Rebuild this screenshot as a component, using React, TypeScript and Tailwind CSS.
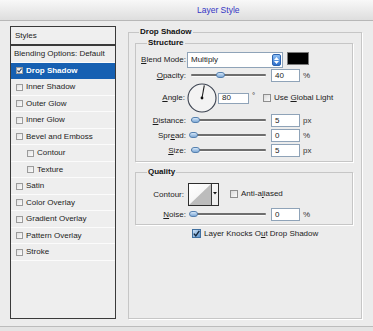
import type { ReactNode } from 'react';

type StyleRow = {
    name: string;
    h: string; // alternating 17/16 so the rows land where the list has them
    checked?: boolean;
    selected?: boolean;
    sub?: boolean;
    noBox?: boolean;
};

const styleRows: StyleRow[] = [
    { name: "Blending Options: Default", h: "h-[17px]", noBox: true },
    { name: "Drop Shadow", h: "h-[16px]", checked: true, selected: true },
    { name: "Inner Shadow", h: "h-[17px]" },
    { name: "Outer Glow", h: "h-[16px]" },
    { name: "Inner Glow", h: "h-[17px]" },
    { name: "Bevel and Emboss", h: "h-[16px]" },
    { name: "Contour", h: "h-[17px]", sub: true },
    { name: "Texture", h: "h-[16px]", sub: true },
    { name: "Satin", h: "h-[17px]" },
    { name: "Color Overlay", h: "h-[16px]" },
    { name: "Gradient Overlay", h: "h-[17px]" },
    { name: "Pattern Overlay", h: "h-[16px]" },
    { name: "Stroke", h: "h-[17px]" },
];

function ListBox({ checked }: { checked?: boolean }) {
    return (
        <div className="flex h-[7px] w-[7px] items-center justify-center border border-[#9b9b9b] bg-gradient-to-br from-[#e2e2e2] to-[#fbfbfb]">
            {checked && (
                <svg width="5" height="5" viewBox="0 0 5 5">
                    <path d="M0.5 2.5 L2 4 L4.6 0.6" fill="none" stroke="#1d3f6e" strokeWidth="1.1" />
                </svg>
            )}
        </div>
    );
}

function CheckBox({ checked }: { checked?: boolean }) {
    if (checked) {
        return (
            <div className="flex h-[9px] w-[9px] items-center justify-center border border-[#3f6f9f] bg-gradient-to-br from-[#cfe2f5] to-[#5b93cc]">
                <svg width="7" height="7" viewBox="0 0 7 7">
                    <path d="M0.8 3.6 L2.8 5.8 L6.3 0.9" fill="none" stroke="#13263b" strokeWidth="1.4" />
                </svg>
            </div>
        );
    }
    return <div className="h-[8px] w-[8px] border border-[#8e8e8e] bg-gradient-to-br from-[#dadada] to-[#fafafa]" />;
}

function Slider({ thumb }: { thumb: number }) {
    return (
        <div className="relative ml-[5px] h-[9px] w-[75px]">
            <div className="absolute left-0 right-0 top-[3px] h-[2px] rounded-full bg-[#6e6e6e]" />
            <div className="absolute left-[1px] right-[1px] top-[5px] h-px bg-[#fbfbfb]" />
            <div
                className="absolute top-[1px] h-[6px] w-[9px] rounded-full border border-[#5681b0] bg-gradient-to-b from-[#d3e6f8] to-[#7fa9d6]"
                style={{ left: thumb }}
            />
        </div>
    );
}

function NumField({ value, w = "w-[29px]", h = "h-[13px]" }: { value: string; w?: string; h?: string }) {
    return (
        <div className={`flex ${w} ${h} items-center border border-[#8fa3b8] bg-white pl-[3px]`}>
            {value}
        </div>
    );
}

function SliderRow({ label, value, unit, thumb, mt }: { label: ReactNode; value: string; unit: string; thumb: number; mt: string }) {
    return (
        <div className={`flex h-[13px] items-center ${mt}`}>
            <div className="w-[50px] text-right">{label}</div>
            <Slider thumb={thumb} />
            <div className="ml-[5px]">
                <NumField value={value} />
            </div>
            <span className="ml-[3px] text-[#333]">{unit}</span>
        </div>
    );
}

function App() {
    return (
        <div className="h-[331px] w-[373px] overflow-hidden bg-[#e4e4e4] font-['Liberation_Sans',Arial,sans-serif] text-[8px] leading-[10px] text-[#1c1c1c]">
            {/* Title bar */}
            <div className="h-[21px] border-b border-[#b7b7b7] bg-gradient-to-b from-[#f8f8f8] to-[#dedede] pl-[197px] text-[8.5px] leading-[20px] text-[#3434c4]">
                Layer Style
            </div>

            <div className="flex h-[306px] border-b border-[#bcbcbc] bg-[#ececec] pl-[10px] pt-[5px]">
                {/* Left side, styles list */}
                <div className="flex w-[106px] flex-col">
                    <div className="flex h-[19px] items-center border border-[#3a3a3a] bg-[#efefef] pl-[4px]">Styles</div>
                    <div className="h-[274px] border border-[#3a3a3a] bg-[#eeeeee]">
                        {styleRows.map((row) => (
                            <div
                                key={row.name}
                                className={`flex ${row.h} items-center border-b ${row.selected ? "border-[#1660b2] bg-[#1660b2] font-bold text-white" : "border-[#fbfbfb]"}`}
                            >
                                {row.noBox ? (
                                    <span className="pl-[3px]">{row.name}</span>
                                ) : (
                                    <>
                                        <div className={row.sub ? "ml-[16px]" : "ml-[5px]"}>
                                            <ListBox checked={row.checked} />
                                        </div>
                                        <span className="ml-[3px]">{row.name}</span>
                                    </>
                                )}
                            </div>
                        ))}
                    </div>
                </div>

                {/* Right side, Drop Shadow settings */}
                <div className="ml-[12px]">
                    <fieldset className="mt-[1px] w-[234px] border border-[#c6c6c6] px-[6px] pb-[79px] shadow-[1px_1px_0_#ffffff]">
                        <legend className="ml-[4px] px-[1px] font-bold text-[#111]">Drop Shadow</legend>

                        <fieldset className="mt-[1px] w-[218px] border border-[#c6c6c6] pb-[4px] shadow-[1px_1px_0_#ffffff]">
                            <legend className="ml-[11px] px-[1px] font-bold text-[#111]">Structure</legend>

                            {/* Blend mode */}
                            <div className="mt-[4px] flex h-[16px] items-start">
                                <div className="w-[50px] self-center text-right">
                                    <span className="underline">B</span>lend Mode:
                                </div>
                                <div className="ml-[1px] flex h-[16px] w-[96px] items-center border border-[#8fa3b8] bg-white">
                                    <span className="flex-1 pl-[3px]">Multiply</span>
                                    <div className="mr-[1px] flex h-[12px] w-[9px] flex-col items-center justify-center gap-[1px] rounded-[2px] border border-[#2d64b0] bg-gradient-to-b from-[#8fc0f4] to-[#2c6fcc]">
                                        <svg width="5" height="3" viewBox="0 0 5 3"><path d="M0 3 L2.5 0 L5 3 Z" fill="#fff" /></svg>
                                        <svg width="5" height="3" viewBox="0 0 5 3"><path d="M0 0 L2.5 3 L5 0 Z" fill="#fff" /></svg>
                                    </div>
                                </div>
                                <div className="ml-[4px] h-[13px] w-[22px] border border-[#7a7a7a] bg-black" />
                            </div>

                            {/* Opacity */}
                            <SliderRow label={<><span className="underline">O</span>pacity:</>} value="40" unit="%" thumb={25} mt="mt-[1px]" />

                            {/* Angle */}
                            <div className="mt-[1px] flex h-[30px] items-center">
                                <div className="w-[49px] text-right">
                                    <span className="underline">A</span>ngle:
                                </div>
                                <svg className="ml-[2px]" width="30" height="30" viewBox="0 0 30 30">
                                    <circle cx="15" cy="15" r="14" fill="#f3f3f3" stroke="#3b4250" strokeWidth="1.1" />
                                    <line x1="15" y1="15" x2="17.3" y2="2.4" stroke="#1e1e1e" strokeWidth="1.1" />
                                    <circle cx="15" cy="15" r="1.4" fill="#111" />
                                </svg>
                                <div className="ml-[1px]">
                                    <NumField value="80" w="w-[31px]" h="h-[11px]" />
                                </div>
                                <span className="w-[14px] self-start pl-[3px] pt-[8px]">°</span>
                                <CheckBox />
                                <span className="ml-[3px]">
                                    Use <span className="underline">G</span>lobal Light
                                </span>
                            </div>

                            <SliderRow label={<><span className="underline">D</span>istance:</>} value="5" unit="px" thumb={0} mt="mt-[1px]" />
                            <SliderRow label={<>Spr<span className="underline">e</span>ad:</>} value="0" unit="%" thumb={-2} mt="mt-[2px]" />
                            <SliderRow label={<><span className="underline">S</span>ize:</>} value="5" unit="px" thumb={0} mt="mt-[2px]" />
                        </fieldset>

                        <fieldset className="mt-[5px] w-[218px] border border-[#c6c6c6] pb-[3px] shadow-[1px_1px_0_#ffffff]">
                            <legend className="ml-[11px] px-[1px] font-bold text-[#111]">Quality</legend>

                            {/* Contour picker */}
                            <div className="mt-[6px] flex h-[23px] items-center">
                                <div className="w-[48px] text-right">Contour:</div>
                                <svg className="ml-[4px]" width="31" height="23" viewBox="0 0 31 23">
                                    <defs>
                                        <linearGradient id="cg" x1="0" y1="0" x2="1" y2="1">
                                            <stop offset="0" stopColor="#ffffff" />
                                            <stop offset="1" stopColor="#ececec" />
                                        </linearGradient>
                                    </defs>
                                    <rect x="0.5" y="0.5" width="30" height="22" fill="url(#cg)" stroke="#2e2e2e" />
                                    <path d="M1 22 L23 1 L23 22 Z" fill="#bcbcbc" />
                                    <line x1="23.5" y1="1" x2="23.5" y2="22" stroke="#3a3a3a" />
                                    <path d="M25 9 L29 9 L27 11.5 Z" fill="#111" />
                                </svg>
                                <div className="ml-[11px] flex items-center self-start pt-[6px]">
                                    <CheckBox />
                                    <span className="ml-[3px]">
                                        Anti-a<span className="underline">l</span>iased
                                    </span>
                                </div>
                            </div>

                            <SliderRow label={<><span className="underline">N</span>oise:</>} value="0" unit="%" thumb={-2} mt="mt-[2px]" />
                        </fieldset>

                        {/* Knockout toggle */}
                        <div className="mt-[3px] flex h-[11px] items-center">
                            <div className="ml-[57px]">
                                <CheckBox checked />
                            </div>
                            <span className="ml-[3px]">
                                Layer Knocks O<span className="underline">u</span>t Drop Shadow
                            </span>
                        </div>
                    </fieldset>
                </div>
            </div>
        </div>
    );
}

export default App
